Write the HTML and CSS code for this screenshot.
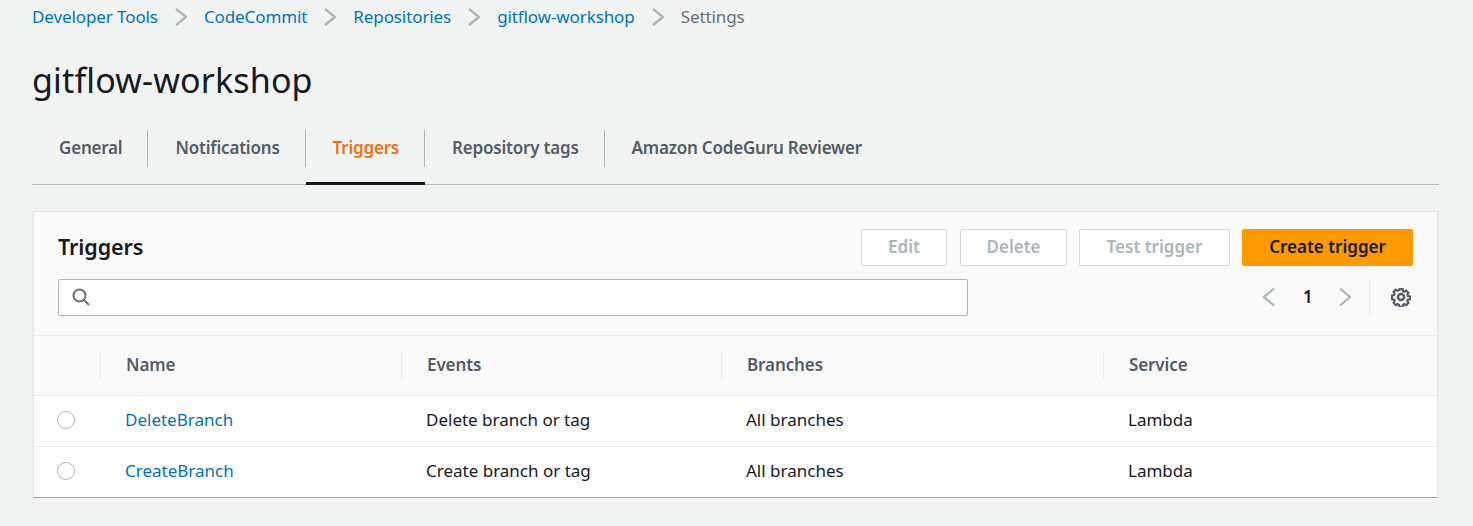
FILE: index.html
```html
<!DOCTYPE html>
<html lang="en">
<head>
  <meta charset="UTF-8" />
  <meta name="viewport" content="width=device-width, initial-scale=1.0"/>
  <title>gitflow-workshop - Settings</title>
  <link rel="stylesheet" href="styles.css">
</head>
<body>
  <nav class="breadcrumbs">
    <a href="#">Developer Tools</a>
    <svg class="crumb-sep" viewBox="0 0 12 18"><path d="M1 1 11 9 1 17"/></svg>
    <a href="#">CodeCommit</a>
    <svg class="crumb-sep" viewBox="0 0 12 18"><path d="M1 1 11 9 1 17"/></svg>
    <a href="#">Repositories</a>
    <svg class="crumb-sep" viewBox="0 0 12 18"><path d="M1 1 11 9 1 17"/></svg>
    <a href="#">gitflow-workshop</a>
    <svg class="crumb-sep" viewBox="0 0 12 18"><path d="M1 1 11 9 1 17"/></svg>
    <span class="crumb-current">Settings</span>
  </nav>

  <h1 class="page-title">gitflow-workshop</h1>

  <ul class="tabs">
    <li class="tab"><span class="tab-label">General</span></li>
    <li class="tab"><span class="tab-label">Notifications</span></li>
    <li class="tab active"><span class="tab-label">Triggers</span></li>
    <li class="tab"><span class="tab-label">Repository tags</span></li>
    <li class="tab"><span class="tab-label">Amazon CodeGuru Reviewer</span></li>
  </ul>

  <section class="card">
    <div class="card-head">
      <div class="card-title-row">
        <h2 class="card-title">Triggers</h2>
        <div class="actions">
          <button class="btn btn-edit" disabled>Edit</button>
          <button class="btn btn-delete" disabled>Delete</button>
          <button class="btn btn-test" disabled>Test trigger</button>
          <button class="btn btn-primary">Create trigger</button>
        </div>
      </div>
      <div class="filter-row">
        <div class="search">
          <svg class="search-icon" viewBox="0 0 18 18"><circle cx="7.500" cy="7.500" r="6"/><path d="m12 12 5 5"/></svg>
        </div>
        <div class="pager">
          <svg class="pager-arrow" viewBox="0 0 14 20"><path d="M12 1.500 2 10l10 8.500"/></svg>
          <span class="pager-num">1</span>
          <svg class="pager-arrow" viewBox="0 0 14 20"><path d="m2 1.500 10 8.500-10 8.500"/></svg>
        </div>
        <div class="prefs">
          <svg class="gear" viewBox="0 0 20 20">
            <circle cx="10" cy="10" r="3"/>
            <path d="M8.200 1.200h3.600l.5 2.300 1.500.7 2-1.300 2.500 2.500-1.300 2 .7 1.500 2.300.5v3.200l-2.300.5-.7 1.500 1.300 2-2.500 2.500-2-1.300-1.500.7-.5 2.300H8.200l-.5-2.300-1.500-.7-2 1.300-2.500-2.500 1.300-2-.7-1.500-2.300-.5V8.400l2.300-.5.7-1.500-1.300-2 2.500-2.500 2 1.300 1.500-.7z" transform="translate(1 1) scale(.9)"/>
          </svg>
        </div>
      </div>
    </div>

    <table class="triggers">
      <thead>
        <tr>
          <th class="col-radio"><span class="th-inner"></span></th>
          <th class="col-name"><span class="th-inner">Name</span></th>
          <th class="col-events"><span class="th-inner">Events</span></th>
          <th class="col-branches"><span class="th-inner">Branches</span></th>
          <th class="col-service"><span class="th-inner">Service</span></th>
        </tr>
      </thead>
      <tbody>
        <tr>
          <td><span class="radio"></span></td>
          <td><a href="#">DeleteBranch</a></td>
          <td>Delete branch or tag</td>
          <td>All branches</td>
          <td>Lambda</td>
        </tr>
        <tr>
          <td><span class="radio"></span></td>
          <td><a href="#">CreateBranch</a></td>
          <td>Create branch or tag</td>
          <td>All branches</td>
          <td>Lambda</td>
        </tr>
      </tbody>
    </table>
  </section>
</body>
</html>
```

FILE: styles.css
```css
* {
  box-sizing: border-box;
}
body {
  margin: 0;
  padding: 0 35px 0 32px;
  background: #f2f3f3;
  color: #16191f;
  font-family: "Noto Sans", "Open Sans", sans-serif;
  font-size: 17px;
}
a {
  color: #0073bb;
  text-decoration: none;
}

.breadcrumbs {
  display: flex;
  align-items: center;
  height: 33px;
  font-size: 17px;
  letter-spacing: -0.1px;
}
.crumb-sep {
  width: 12px;
  height: 18px;
  margin: 0 17px;
  fill: none;
  stroke: #aab7b8;
  stroke-width: 2.300;
}
.crumb-current {
  color: #687078;
}

.page-title {
  margin: 25px 0 0;
  font-size: 34px;
  line-height: 44px;
  font-weight: 400;
  letter-spacing: 0.15px;
}

.tabs {
  display: flex;
  list-style: none;
  margin: 28px -1px 0 0;
  padding: 0;
  height: 55px;
  border-bottom: 1px solid #a9bbb8;
}
.tab {
  height: 55px;
  font-weight: 600;
  color: #545b64;
}
.tab-label {
  display: block;
  height: 37px;
  line-height: 35px;
  padding: 0 25px 0 27px;
  border-right: 1px solid #aab7b8;
  letter-spacing: -0.2px;
}
.tab:last-child .tab-label {
  border-right: 0;
}
.tab.active {
  color: #ec7211;
  border-bottom: 3px solid #16191f;
}

.card {
  margin: 26px 0 0 1px;
  background: #fff;
  border: 1px solid #e4e7e7;
  border-bottom: 1px solid #9ba7a8;
  box-shadow: 0 1px 1px 0 rgba(0, 28, 36, 0.12);
}
.card-head {
  height: 124px;
  padding: 17px 24px 0;
  background: #fafafa;
  border-bottom: 1px solid #eaeded;
}
.card-title-row {
  display: flex;
  justify-content: space-between;
  align-items: center;
  height: 37px;
}
.card-title {
  margin: 0 0 2px;
  font-size: 21.500px;
  font-weight: 600;
  letter-spacing: -0.1px;
}
.actions {
  display: flex;
  gap: 12px;
}
.btn {
  height: 37px;
  padding: 0 0 2px;
  border: 1px solid #d5dbdb;
  border-radius: 2px;
  background: #fff;
  color: #aab7b8;
  font-family: inherit;
  font-size: 17px;
  font-weight: 600;
}
.btn-edit {
  width: 86px;
  margin-right: 1px;
}
.btn-delete {
  width: 107px;
}
.btn-test {
  width: 151px;
}
.btn-primary {
  width: 171px;
  border-color: #ff9900;
  background: #ff9900;
  color: #16191f;
}

.filter-row {
  display: flex;
  align-items: center;
  height: 37px;
  margin-top: 13px;
}
.search {
  display: flex;
  align-items: center;
  width: 910px;
  height: 37px;
  padding-left: 13px;
  background: #fff;
  border: 1px solid #aab7b8;
  border-radius: 2px;
}
.search-icon {
  width: 18px;
  height: 18px;
  margin-bottom: 1px;
  fill: none;
  stroke: #687078;
  stroke-width: 2;
}
.pager {
  display: flex;
  align-items: center;
  margin-left: auto;
  gap: 27px;
}
.pager-arrow {
  width: 14px;
  height: 20px;
  margin-bottom: 1px;
  fill: none;
  stroke: #aab7b8;
  stroke-width: 2.200;
}
.pager-num {
  width: 8px;
  margin-bottom: 2px;
  font-weight: 600;
  text-align: center;
}
.prefs {
  display: flex;
  align-items: center;
  height: 37px;
  margin-left: 17px;
  padding: 0 2px 0 21px;
  border-left: 1px solid #eaeded;
}
.gear {
  width: 20px;
  height: 20px;
  margin-bottom: 1px;
  fill: none;
  stroke: #545b64;
  stroke-width: 2.400;
}

.triggers {
  width: 100%;
  table-layout: fixed;
  border-collapse: collapse;
}
.triggers th {
  height: 59px;
  padding: 0;
  background: #fafafa;
  border-bottom: 1px solid #eaeded;
  color: #545b64;
  font-weight: 600;
  text-align: left;
}
.col-radio {
  width: 66px;
}
.col-name {
  width: 301px;
}
.col-events {
  width: 320px;
}
.col-branches {
  width: 382px;
}
.th-inner {
  display: block;
  height: 29px;
  line-height: 28px;
  padding-left: 25px;
  letter-spacing: -0.1px;
}
.col-name .th-inner,
.col-events .th-inner,
.col-branches .th-inner,
.col-service .th-inner {
  border-left: 1px solid #eaeded;
}
.triggers td {
  height: 51px;
  padding: 0 0 2px 25px;
  border-bottom: 1px solid #eaeded;
}
.triggers tr:last-child td {
  border-bottom: 0;
}
.triggers td:first-child {
  padding-left: 23px;
}
.radio {
  display: block;
  width: 18px;
  height: 18px;
  border: 1.500px solid #aab7b8;
  border-radius: 50%;
  background: #fff;
}
```
